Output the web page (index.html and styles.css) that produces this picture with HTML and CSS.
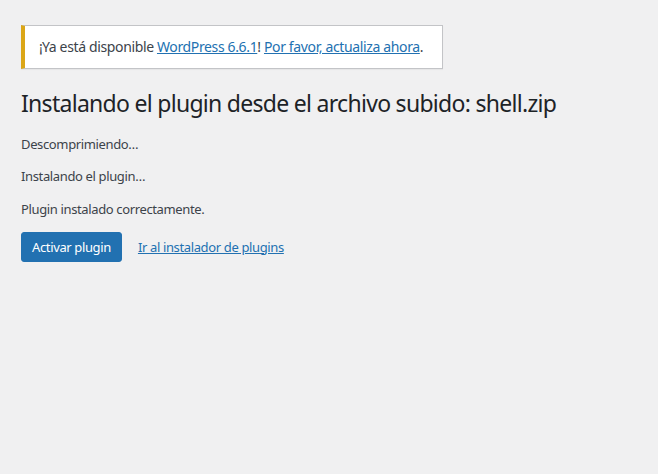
FILE: index.html
```html
<!DOCTYPE html>
<html lang="es">
<head>
<meta charset="utf-8">
<title>Instalar plugin</title>
<link rel="stylesheet" href="styles.css">
</head>
<body>
<div class="content">
  <div class="update-nag">¡Ya está disponible <a href="#">WordPress 6.6.1</a>! <a href="#">Por favor, actualiza ahora</a>.</div>
  <div class="wrap">
    <h1>Instalando el plugin desde el archivo subido: shell.zip</h1>
    <p>Descomprimiendo…</p>
    <p>Instalando el plugin…</p>
    <p>Plugin instalado correctamente.</p>
    <p class="actions"><a href="#" class="button">Activar plugin</a> <a href="#" class="link">Ir al instalador de plugins</a></p>
  </div>
</div>
</body>
</html>
```
FILE: styles.css
```css
html, body {
  margin: 0;
  padding: 0;
  background: #f0f0f1;
}
body {
  font-family: "Noto Sans", sans-serif;
  font-size: 13px;
  line-height: 1.4;
  color: #3c434a;
  letter-spacing: -0.364px;
}
.content {
  padding: 0 0 0 21px;
}
a {
  color: #2271b1;
}
.update-nag {
  display: inline-block;
  margin: 25px 0 0 0;
  padding: 11px 19px 11px 14px;
  font-size: 14px;
  line-height: 20px;
  background: #fff;
  border: 1px solid #c3c4c7;
  border-left: 4px solid #dba617;
  box-shadow: 0 1px 1px rgba(0,0,0,0.04);
}
.wrap h1 {
  font-size: 23px;
  font-weight: 400;
  color: #1d2327;
  margin: 0;
  padding: 20px 0 3px;
  line-height: 1.3;
  letter-spacing: -0.71px;
}
.wrap p {
  margin: 13px 0;
  line-height: 1.5;
}
.actions {
  display: flex;
  align-items: center;
  gap: 16px;
}
.button {
  display: inline-block;
  background: #2271b1;
  border: 1px solid #2271b1;
  color: #fff;
  text-decoration: none;
  border-radius: 3px;
  padding: 0 10px;
  min-height: 30px;
  line-height: 28px;
  box-sizing: border-box;
}
```
